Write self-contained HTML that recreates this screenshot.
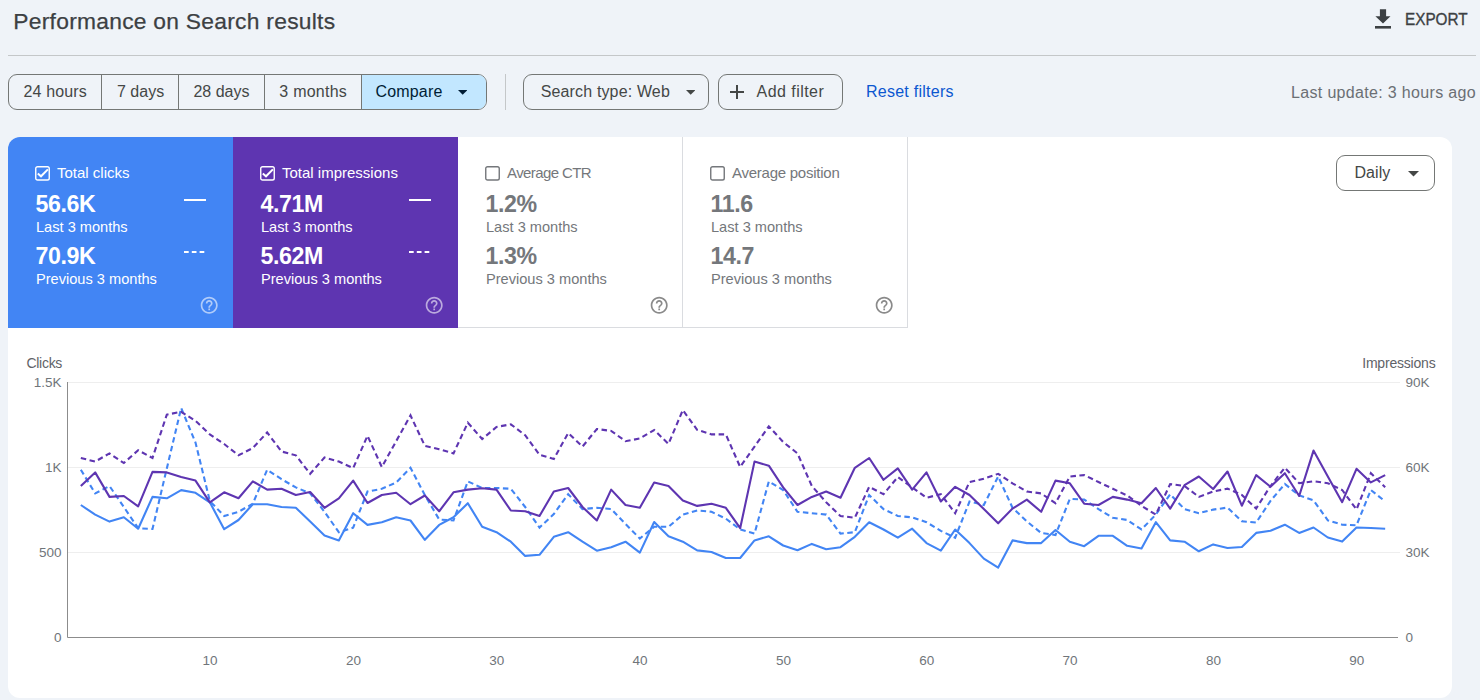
<!DOCTYPE html>
<html><head><meta charset="utf-8"><style>
html,body{margin:0;padding:0;}
body{width:1480px;height:700px;overflow:hidden;background:#eff3f8;position:relative;font-family:"Liberation Sans",sans-serif;}
.t{position:absolute;white-space:nowrap;line-height:1;}
.abs{position:absolute;box-sizing:border-box;}
</style></head><body>
<div class="t" style="left:13.3px;top:10.30px;font-size:22.8px;color:#3c4043;font-weight:400;letter-spacing:0.27px;-webkit-text-stroke:0.25px #3c4043;">Performance on Search results</div>
<svg class="abs" style="left:1372px;top:7px" width="22" height="24" viewBox="0 0 22 24">
<path d="M7.9 2.3h6.2v6.9h4.4L11 16.6 3.4 9.2h4.5z" fill="#3c4043"/><rect x="3" y="19" width="16" height="2.6" fill="#3c4043"/></svg>
<div class="t" style="left:1404.8px;top:10.81px;font-size:17px;color:#3c4043;font-weight:400;transform:scaleX(0.9);transform-origin:0 0;-webkit-text-stroke:0.35px #3c4043;">EXPORT</div>
<div class="abs" style="left:8px;top:55px;width:1468px;height:1px;background:#c4c7c9"></div>
<div class="abs" style="left:8px;top:74px;width:479px;height:36px;border:1px solid #747775;border-radius:9px;overflow:hidden"><div class="abs" style="left:352px;top:0;width:130px;height:34px;background:#c2e7ff"></div><div class="abs" style="left:92px;top:0;width:1px;height:34px;background:#747775"></div><div class="abs" style="left:169px;top:0;width:1px;height:34px;background:#747775"></div><div class="abs" style="left:255px;top:0;width:1px;height:34px;background:#747775"></div><div class="abs" style="left:352px;top:0;width:1px;height:34px;background:#747775"></div></div>
<div class="t" style="left:23.5px;top:83.76px;font-size:16px;color:#444746;font-weight:400;letter-spacing:0.15px;">24 hours</div>
<div class="t" style="left:117px;top:83.76px;font-size:16px;color:#444746;font-weight:400;">7 days</div>
<div class="t" style="left:193.4px;top:83.76px;font-size:16px;color:#444746;font-weight:400;">28 days</div>
<div class="t" style="left:279.3px;top:83.76px;font-size:16px;color:#444746;font-weight:400;letter-spacing:0.25px;">3 months</div>
<div class="t" style="left:375.6px;top:83.76px;font-size:16px;color:#001d35;font-weight:400;letter-spacing:0.15px;">Compare</div>
<svg class="abs" style="left:457.6px;top:90px" width="9.4" height="4.7" viewBox="0 0 11 5.5"><path d="M0 0h11L5.5 5.5z" fill="#001d35"/></svg>
<div class="abs" style="left:505px;top:74px;width:1px;height:36px;background:#c4c7c9"></div>
<div class="abs" style="left:523px;top:74px;width:186px;height:36px;border:1px solid #747775;border-radius:9px"></div>
<div class="t" style="left:540.7px;top:83.76px;font-size:16px;color:#444746;font-weight:400;letter-spacing:0.15px;">Search type: Web</div>
<svg class="abs" style="left:685.6px;top:90px" width="9.4" height="4.7" viewBox="0 0 11 5.5"><path d="M0 0h11L5.5 5.5z" fill="#444746"/></svg>
<div class="abs" style="left:718px;top:74px;width:125px;height:36px;border:1px solid #747775;border-radius:9px"></div>
<svg class="abs" style="left:729px;top:84px" width="16" height="16" viewBox="0 0 16 16"><path d="M7 1h2v6h6v2H9v6H7V9H1V7h6z" fill="#444746"/></svg>
<div class="t" style="left:756.6px;top:83.76px;font-size:16px;color:#444746;font-weight:400;letter-spacing:0.45px;">Add filter</div>
<div class="t" style="left:866px;top:83.76px;font-size:16px;color:#0b57d0;font-weight:400;letter-spacing:0.25px;">Reset filters</div>
<div class="t" style="right:4px;top:84.76px;font-size:16px;color:#6b6f74;font-weight:400;letter-spacing:0.33px;">Last update: 3 hours ago</div>
<div class="abs" style="left:8px;top:137px;width:1444px;height:561px;background:#fff;border-radius:12px"></div>
<div class="abs" style="left:8px;top:137px;width:225px;height:191px;background:#4285f4;border-top-left-radius:12px"></div>
<div class="abs" style="left:233px;top:137px;width:225px;height:191px;background:#5e35b1"></div>
<div class="abs" style="left:458px;top:137px;width:450px;height:191px;border-right:1px solid #dadce0;border-bottom:1px solid #dadce0"></div>
<div class="abs" style="left:682px;top:137px;width:1px;height:191px;background:#dadce0"></div>
<svg class="abs" style="left:35px;top:166px" width="15" height="15" viewBox="0 0 15 15"><rect x="0.75" y="0.75" width="13.5" height="13.3" rx="1.8" fill="none" stroke="#fff" stroke-width="1.4"/><path d="M2.8 7.6l3.2 2.7 6.9-6.9" fill="none" stroke="#fff" stroke-width="2"/></svg>
<div class="t" style="left:57px;top:165.40px;font-size:15px;color:#fff;font-weight:400;">Total clicks</div>
<div class="t" style="left:35.5px;top:192.56px;font-size:23.2px;color:#fff;font-weight:700;letter-spacing:-0.4px;">56.6K</div>
<div class="t" style="left:36px;top:219.84px;font-size:14.6px;color:#fff;font-weight:400;">Last 3 months</div>
<div class="t" style="left:35.5px;top:244.86px;font-size:23.2px;color:#fff;font-weight:700;letter-spacing:-0.4px;">70.9K</div>
<div class="t" style="left:36px;top:271.84px;font-size:14.6px;color:#fff;font-weight:400;">Previous 3 months</div>
<div class="abs" style="left:184px;top:199px;width:22px;height:2px;background:#fff"></div>
<svg class="abs" style="left:184px;top:251px" width="22" height="2"><path d="M0 1h22" stroke="#fff" stroke-width="2" stroke-dasharray="4.7 3.1"/></svg>
<svg class="abs" style="left:199.00px;top:294.90px;opacity:0.58" width="20.4" height="20.4" viewBox="0 0 24 24"><path fill="#fff" d="M11 18h2v-2h-2v2zm1-16C6.48 2 2 6.48 2 12s4.48 10 10 10 10-4.48 10-10S17.520 2 12 2zm0 18c-4.41 0-8-3.59-8-8s3.59-8 8-8 8 3.590 8 8-3.59 8-8 8zm0-14c-2.21 0-4 1.79-4 4h2c0-1.1.9-2 2-2s2 .9 2 2c0 2-3 1.75-3 5h2c0-2.25 3-2.5 3-5 0-2.21-1.79-4-4-4z"/></svg>
<svg class="abs" style="left:260px;top:166px" width="15" height="15" viewBox="0 0 15 15"><rect x="0.75" y="0.75" width="13.5" height="13.3" rx="1.8" fill="none" stroke="#fff" stroke-width="1.4"/><path d="M2.8 7.6l3.2 2.7 6.9-6.9" fill="none" stroke="#fff" stroke-width="2"/></svg>
<div class="t" style="left:282px;top:165.40px;font-size:15px;color:#fff;font-weight:400;">Total impressions</div>
<div class="t" style="left:260.5px;top:192.56px;font-size:23.2px;color:#fff;font-weight:700;letter-spacing:-0.4px;">4.71M</div>
<div class="t" style="left:261px;top:219.84px;font-size:14.6px;color:#fff;font-weight:400;">Last 3 months</div>
<div class="t" style="left:260.5px;top:244.86px;font-size:23.2px;color:#fff;font-weight:700;letter-spacing:-0.4px;">5.62M</div>
<div class="t" style="left:261px;top:271.84px;font-size:14.6px;color:#fff;font-weight:400;">Previous 3 months</div>
<div class="abs" style="left:409px;top:199px;width:22px;height:2px;background:#fff"></div>
<svg class="abs" style="left:409px;top:251px" width="22" height="2"><path d="M0 1h22" stroke="#fff" stroke-width="2" stroke-dasharray="4.7 3.1"/></svg>
<svg class="abs" style="left:424.00px;top:294.90px;opacity:0.58" width="20.4" height="20.4" viewBox="0 0 24 24"><path fill="#fff" d="M11 18h2v-2h-2v2zm1-16C6.48 2 2 6.48 2 12s4.48 10 10 10 10-4.48 10-10S17.520 2 12 2zm0 18c-4.41 0-8-3.59-8-8s3.59-8 8-8 8 3.590 8 8-3.59 8-8 8zm0-14c-2.21 0-4 1.79-4 4h2c0-1.1.9-2 2-2s2 .9 2 2c0 2-3 1.75-3 5h2c0-2.25 3-2.5 3-5 0-2.21-1.79-4-4-4z"/></svg>
<svg class="abs" style="left:485px;top:166px" width="15" height="15" viewBox="0 0 15 15"><rect x="0.75" y="0.75" width="13.5" height="13.3" rx="1.8" fill="none" stroke="#74777b" stroke-width="1.4"/></svg>
<div class="t" style="left:507px;top:165.40px;font-size:15px;color:#74777b;font-weight:400;letter-spacing:-0.6px;">Average CTR</div>
<div class="t" style="left:485.5px;top:192.56px;font-size:23.2px;color:#74777b;font-weight:700;letter-spacing:-0.4px;">1.2%</div>
<div class="t" style="left:486px;top:219.84px;font-size:14.6px;color:#74777b;font-weight:400;">Last 3 months</div>
<div class="t" style="left:485.5px;top:244.86px;font-size:23.2px;color:#74777b;font-weight:700;letter-spacing:-0.4px;">1.3%</div>
<div class="t" style="left:486px;top:271.84px;font-size:14.6px;color:#74777b;font-weight:400;">Previous 3 months</div>
<svg class="abs" style="left:649.00px;top:294.90px;opacity:1" width="20.4" height="20.4" viewBox="0 0 24 24"><path fill="#8a8a8a" d="M11 18h2v-2h-2v2zm1-16C6.48 2 2 6.48 2 12s4.48 10 10 10 10-4.48 10-10S17.520 2 12 2zm0 18c-4.41 0-8-3.59-8-8s3.59-8 8-8 8 3.590 8 8-3.59 8-8 8zm0-14c-2.21 0-4 1.79-4 4h2c0-1.1.9-2 2-2s2 .9 2 2c0 2-3 1.75-3 5h2c0-2.25 3-2.5 3-5 0-2.21-1.79-4-4-4z"/></svg>
<svg class="abs" style="left:710px;top:166px" width="15" height="15" viewBox="0 0 15 15"><rect x="0.75" y="0.75" width="13.5" height="13.3" rx="1.8" fill="none" stroke="#74777b" stroke-width="1.4"/></svg>
<div class="t" style="left:732px;top:165.40px;font-size:15px;color:#74777b;font-weight:400;letter-spacing:-0.25px;">Average position</div>
<div class="t" style="left:710.5px;top:192.56px;font-size:23.2px;color:#74777b;font-weight:700;letter-spacing:-0.4px;">11.6</div>
<div class="t" style="left:711px;top:219.84px;font-size:14.6px;color:#74777b;font-weight:400;">Last 3 months</div>
<div class="t" style="left:710.5px;top:244.86px;font-size:23.2px;color:#74777b;font-weight:700;letter-spacing:-0.4px;">14.7</div>
<div class="t" style="left:711px;top:271.84px;font-size:14.6px;color:#74777b;font-weight:400;">Previous 3 months</div>
<svg class="abs" style="left:874.00px;top:294.90px;opacity:1" width="20.4" height="20.4" viewBox="0 0 24 24"><path fill="#8a8a8a" d="M11 18h2v-2h-2v2zm1-16C6.48 2 2 6.48 2 12s4.48 10 10 10 10-4.48 10-10S17.520 2 12 2zm0 18c-4.41 0-8-3.59-8-8s3.59-8 8-8 8 3.590 8 8-3.59 8-8 8zm0-14c-2.21 0-4 1.79-4 4h2c0-1.1.9-2 2-2s2 .9 2 2c0 2-3 1.75-3 5h2c0-2.25 3-2.5 3-5 0-2.21-1.79-4-4-4z"/></svg>
<div class="abs" style="left:1336px;top:155px;width:99px;height:36px;border:1px solid #747775;border-radius:9px"></div>
<div class="t" style="left:1354.4px;top:164.96px;font-size:16px;color:#444746;font-weight:400;letter-spacing:0.1px;">Daily</div>
<svg class="abs" style="left:1407.90px;top:171.20px" width="11" height="5.5" viewBox="0 0 11 5.5"><path d="M0 0h11L5.5 5.5z" fill="#444746"/></svg>
<svg class="abs" style="left:0;top:0" width="1480" height="700" viewBox="0 0 1480 700"><path d="M67 382.5H1400" stroke="#eeeeee" stroke-width="1"/><path d="M67 467.5H1400" stroke="#eeeeee" stroke-width="1"/><path d="M67 552.5H1400" stroke="#eeeeee" stroke-width="1"/><path d="M67.5 382V637.5H1398" fill="none" stroke="#8c8c8c" stroke-width="1"/><polyline points="80.83,505.0 95.17,514.6 109.50,521.6 123.83,517.3 138.17,528.7 152.50,496.9 166.83,498.3 181.17,490.1 195.50,492.8 209.83,502.3 224.17,529.2 238.50,520.0 252.83,504.2 267.17,504.2 281.50,507.0 295.83,507.8 310.17,521.4 324.50,535.5 338.83,540.4 353.17,513.2 367.50,524.9 381.83,522.2 396.17,517.3 410.50,520.5 424.83,539.8 439.17,524.9 453.50,517.3 467.83,503.2 482.17,526.8 496.50,532.2 510.83,541.7 525.17,555.9 539.50,554.8 553.83,536.8 568.17,532.2 582.50,541.7 596.83,550.7 611.17,547.2 625.50,541.7 639.83,552.6 654.17,522.0 668.50,536.3 682.83,541.7 697.17,550.4 711.50,552.0 725.83,558.0 740.17,558.0 754.50,540.4 768.83,536.3 783.17,545.5 797.50,550.2 811.83,543.9 826.17,549.3 840.50,547.2 854.83,536.8 869.17,522.2 883.50,529.5 897.83,537.7 912.17,528.7 926.50,543.1 940.83,550.6 955.17,529.5 969.50,543.1 983.83,558.6 998.17,567.6 1012.50,540.4 1026.83,543.1 1041.17,543.1 1055.50,530.0 1069.83,541.7 1084.17,546.2 1098.50,535.8 1112.83,535.8 1127.17,545.8 1141.50,548.5 1155.83,522.2 1170.17,540.4 1184.50,541.7 1198.83,551.3 1213.17,544.4 1227.50,548.0 1241.83,547.0 1256.17,532.9 1270.50,530.7 1284.83,524.7 1299.17,532.9 1313.50,527.5 1327.83,537.5 1342.17,541.6 1356.50,527.5 1370.83,528.0 1385.17,528.8" fill="none" stroke="#4285f4" stroke-width="2.1" stroke-linejoin="round"/><polyline points="80.83,469.7 95.17,493.4 109.50,486.0 123.83,507.0 138.17,528.2 152.50,529.0 166.83,468.4 181.17,408.0 195.50,442.6 209.83,501.0 224.17,516.0 238.50,511.8 252.83,503.7 267.17,469.7 281.50,479.2 295.83,487.4 310.17,493.4 324.50,511.8 338.83,532.2 353.17,527.6 367.50,491.5 381.83,488.8 396.17,482.5 410.50,467.8 424.83,495.0 439.17,519.5 453.50,520.5 467.83,481.4 482.17,488.0 496.50,488.0 510.83,488.8 525.17,507.0 539.50,527.6 553.83,514.0 568.17,494.2 582.50,509.1 596.83,507.8 611.17,509.1 625.50,524.0 639.83,538.5 654.17,526.8 668.50,526.8 682.83,514.6 697.17,510.5 711.50,511.8 725.83,518.6 740.17,529.5 754.50,533.6 768.83,481.4 783.17,490.1 797.50,511.8 811.83,513.2 826.17,514.6 840.50,533.6 854.83,532.2 869.17,495.0 883.50,509.1 897.83,516.0 912.17,517.3 926.50,522.2 940.83,530.9 955.17,537.7 969.50,501.5 983.83,505.0 998.17,476.5 1012.50,507.8 1026.83,521.4 1041.17,533.0 1055.50,535.0 1069.83,498.8 1084.17,499.6 1098.50,509.1 1112.83,517.8 1127.17,520.0 1141.50,529.5 1155.83,514.6 1170.17,494.2 1184.50,509.1 1198.83,513.2 1213.17,509.6 1227.50,507.6 1241.83,521.2 1256.17,522.6 1270.50,500.9 1284.83,484.0 1299.17,495.4 1313.50,500.3 1327.83,520.4 1342.17,524.7 1356.50,525.3 1370.83,490.0 1385.17,501.4" fill="none" stroke="#4285f4" stroke-width="2.1" stroke-dasharray="5.5 3.5"/><polyline points="80.83,486.0 95.17,472.4 109.50,496.9 123.83,496.0 138.17,506.4 152.50,471.9 166.83,472.4 181.17,477.0 195.50,480.6 209.83,502.3 224.17,492.3 238.50,498.3 252.83,481.4 267.17,489.6 281.50,488.8 295.83,495.0 310.17,492.0 324.50,507.8 338.83,498.3 353.17,480.6 367.50,503.0 381.83,495.0 396.17,492.8 410.50,504.2 424.83,495.5 439.17,511.3 453.50,492.3 467.83,489.6 482.17,488.2 496.50,489.6 510.83,510.5 525.17,511.3 539.50,516.0 553.83,491.5 568.17,488.0 582.50,507.0 596.83,520.5 611.17,489.6 625.50,505.0 639.83,507.8 654.17,482.5 668.50,486.0 682.83,500.4 697.17,505.9 711.50,503.7 725.83,507.8 740.17,528.2 754.50,461.6 768.83,465.7 783.17,487.4 797.50,505.0 811.83,496.9 826.17,491.5 840.50,497.7 854.83,467.8 869.17,458.0 883.50,479.8 897.83,468.4 912.17,489.6 926.50,472.4 940.83,501.5 955.17,486.8 969.50,495.0 983.83,509.1 998.17,523.3 1012.50,508.6 1026.83,499.6 1041.17,511.8 1055.50,480.6 1069.83,483.3 1084.17,503.7 1098.50,505.0 1112.83,496.9 1127.17,499.6 1141.50,503.2 1155.83,488.0 1170.17,508.6 1184.50,485.2 1198.83,476.5 1213.17,489.0 1227.50,471.5 1241.83,505.7 1256.17,475.1 1270.50,486.7 1284.83,473.2 1299.17,496.0 1313.50,450.6 1327.83,476.4 1342.17,502.2 1356.50,468.8 1370.83,482.4 1385.17,475.1" fill="none" stroke="#5e35b1" stroke-width="2.1" stroke-linejoin="round"/><polyline points="80.83,458.0 95.17,461.6 109.50,453.4 123.83,463.0 138.17,450.2 152.50,458.0 166.83,414.6 181.17,411.8 195.50,420.8 209.83,434.4 224.17,444.0 238.50,455.3 252.83,448.0 267.17,432.5 281.50,451.5 295.83,455.3 310.17,473.8 324.50,457.5 338.83,461.6 353.17,468.1 367.50,435.8 381.83,467.0 396.17,441.2 410.50,415.4 424.83,445.8 439.17,449.3 453.50,453.4 467.83,422.7 482.17,439.0 496.50,427.0 510.83,424.3 525.17,435.2 539.50,454.8 553.83,458.9 568.17,433.0 582.50,446.6 596.83,429.0 611.17,430.9 625.50,441.2 639.83,438.5 654.17,430.0 668.50,443.9 682.83,410.0 697.17,429.8 711.50,434.4 725.83,434.4 740.17,467.0 754.50,446.6 768.83,426.3 783.17,442.0 797.50,453.4 811.83,486.0 826.17,502.3 840.50,516.0 854.83,517.8 869.17,486.8 883.50,494.2 897.83,477.0 912.17,487.4 926.50,497.7 940.83,494.2 955.17,513.2 969.50,482.0 983.83,478.7 998.17,473.8 1012.50,483.3 1026.83,491.5 1041.17,493.4 1055.50,503.2 1069.83,476.5 1084.17,475.1 1098.50,482.0 1112.83,488.8 1127.17,495.5 1141.50,505.9 1155.83,514.6 1170.17,484.1 1184.50,486.0 1198.83,496.9 1213.17,491.5 1227.50,488.6 1241.83,494.9 1256.17,508.5 1270.50,486.0 1284.83,467.7 1299.17,483.2 1313.50,481.3 1327.83,483.2 1342.17,490.0 1356.50,509.5 1370.83,473.2 1385.17,487.3" fill="none" stroke="#5e35b1" stroke-width="2.1" stroke-dasharray="5.5 3.5"/></svg>
<div class="t" style="left:26.5px;top:356.15px;font-size:14px;color:#5f6368;font-weight:400;letter-spacing:-0.3px;">Clicks</div>
<div class="t" style="right:44.5px;top:356.15px;font-size:14px;color:#5f6368;font-weight:400;letter-spacing:-0.2px;">Impressions</div>
<div class="t" style="right:1418.5px;top:375.57px;font-size:13.5px;color:#70757a;font-weight:400;">1.5K</div>
<div class="t" style="right:1418.5px;top:460.57px;font-size:13.5px;color:#70757a;font-weight:400;">1K</div>
<div class="t" style="right:1418.5px;top:545.57px;font-size:13.5px;color:#70757a;font-weight:400;">500</div>
<div class="t" style="right:1418.5px;top:630.57px;font-size:13.5px;color:#70757a;font-weight:400;">0</div>
<div class="t" style="left:1405.5px;top:375.57px;font-size:13.5px;color:#70757a;font-weight:400;">90K</div>
<div class="t" style="left:1405.5px;top:460.57px;font-size:13.5px;color:#70757a;font-weight:400;">60K</div>
<div class="t" style="left:1405.5px;top:545.57px;font-size:13.5px;color:#70757a;font-weight:400;">30K</div>
<div class="t" style="left:1405.5px;top:630.57px;font-size:13.5px;color:#70757a;font-weight:400;">0</div>
<div class="t" style="left:160.13333333333335px;width:100px;text-align:center;top:653.57px;font-size:13.5px;color:#70757a;font-weight:400;">10</div>
<div class="t" style="left:303.4666666666667px;width:100px;text-align:center;top:653.57px;font-size:13.5px;color:#70757a;font-weight:400;">20</div>
<div class="t" style="left:446.8px;width:100px;text-align:center;top:653.57px;font-size:13.5px;color:#70757a;font-weight:400;">30</div>
<div class="t" style="left:590.1333333333333px;width:100px;text-align:center;top:653.57px;font-size:13.5px;color:#70757a;font-weight:400;">40</div>
<div class="t" style="left:733.4666666666667px;width:100px;text-align:center;top:653.57px;font-size:13.5px;color:#70757a;font-weight:400;">50</div>
<div class="t" style="left:876.8px;width:100px;text-align:center;top:653.57px;font-size:13.5px;color:#70757a;font-weight:400;">60</div>
<div class="t" style="left:1020.1333333333334px;width:100px;text-align:center;top:653.57px;font-size:13.5px;color:#70757a;font-weight:400;">70</div>
<div class="t" style="left:1163.4666666666667px;width:100px;text-align:center;top:653.57px;font-size:13.5px;color:#70757a;font-weight:400;">80</div>
<div class="t" style="left:1306.8px;width:100px;text-align:center;top:653.57px;font-size:13.5px;color:#70757a;font-weight:400;">90</div>
</body></html>
